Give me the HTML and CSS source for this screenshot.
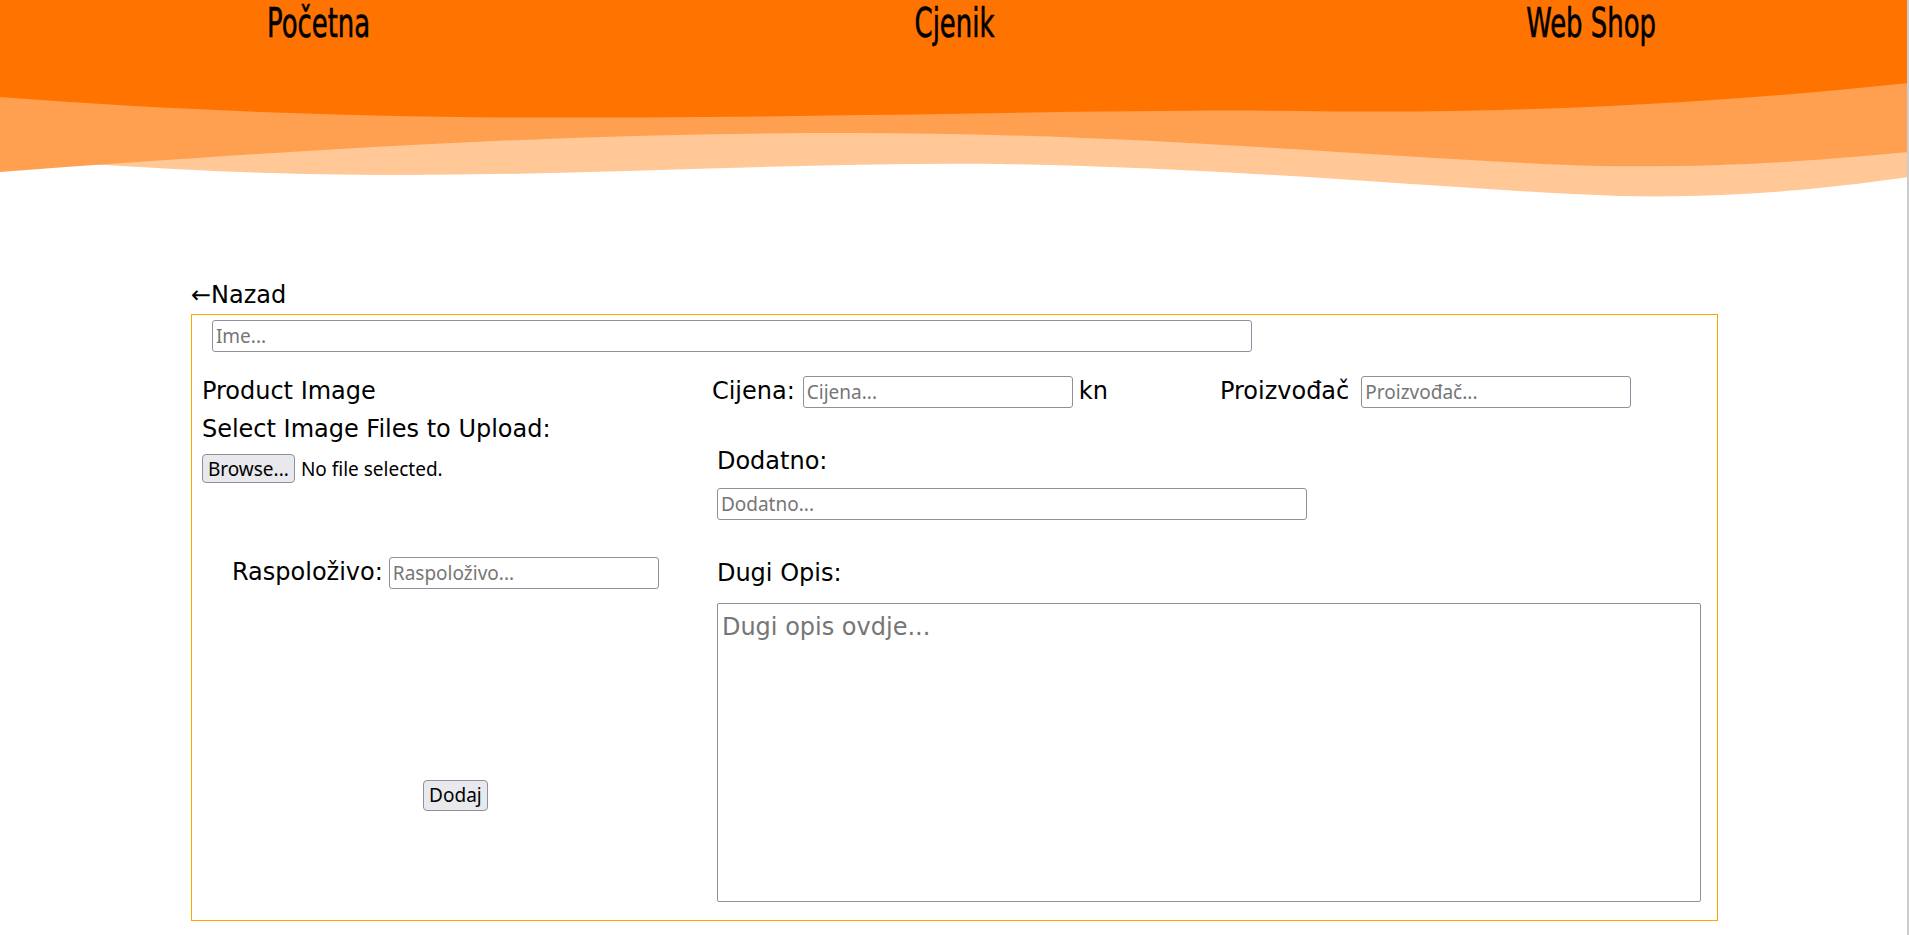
FILE: index.html
```html
<!DOCTYPE html>
<html lang="hr">
<head>
<meta charset="utf-8">
<title>Dodaj proizvod</title>
<link rel="stylesheet" href="styles.css">
</head>
<body>
<header class="site-header">
  <nav class="nav">
    <div class="nav-item"><a class="nav-link" href="#">Početna</a></div>
    <div class="nav-item"><a class="nav-link" href="#">Cjenik</a></div>
    <div class="nav-item"><a class="nav-link" href="#">Web Shop</a></div>
  </nav>
  <svg class="waves" viewBox="0 80 1909 120" preserveAspectRatio="none" aria-hidden="true">
    <path fill="#FFC896" d="M0,80 L0,158 C150,168 250,175 400,175 C600,175 800,162 1000,164 C1250,168 1450,190 1620,196 C1750,199 1850,185 1909,177 L1909,80 Z"/>
    <path fill="#FF9F50" d="M0,80 L0,172 C300,150 550,133 850,133 C1150,133 1400,160 1600,166 C1750,168 1850,157 1909,152 L1909,80 Z"/>
    <path fill="#FF7300" d="M0,80 L0,97 C200,112 400,120 700,117 C950,115 1150,109 1300,111 C1500,114 1700,105 1909,83 L1909,80 Z"/>
  </svg>
</header>

<main class="page">
  <a class="back" href="#">←Nazad</a>
  <form class="product-form">
    <div class="name-row">
      <input class="field-input name-input" type="text" placeholder="Ime...">
    </div>
    <div class="form-grid">
      <div class="col-left">
        <p class="text-line">Product Image</p>
        <p class="text-line">Select Image Files to Upload:</p>
        <div class="file-row">
          <button type="button" class="btn">Browse...</button>
          <span class="file-status">No file selected.</span>
        </div>
        <div class="stock-row">
          <label class="label">Raspoloživo:</label>
          <input class="field-input small-input" type="text" placeholder="Raspoloživo...">
        </div>
        <div class="submit-row">
          <button type="button" class="btn btn-submit">Dodaj</button>
        </div>
      </div>
      <div class="col-right">
        <div class="price-row">
          <div class="cell cell-price">
            <label class="label price-label">Cijena:</label>
            <input class="field-input small-input" type="text" placeholder="Cijena...">
            <span class="label">kn</span>
          </div>
          <div class="cell cell-maker">
            <label class="label maker-label">Proizvođač</label>
            <input class="field-input small-input" type="text" placeholder="Proizvođač...">
          </div>
        </div>
        <div class="field">
          <label class="label block-label first-label">Dodatno:</label>
          <input class="field-input wide-input" type="text" placeholder="Dodatno...">
        </div>
        <div class="field">
          <label class="label block-label second-label">Dugi Opis:</label>
          <textarea class="long-text" placeholder="Dugi opis ovdje..."></textarea>
        </div>
      </div>
    </div>
  </form>
</main>
<div class="scroll-line"></div>
</body>
</html>
```

FILE: styles.css
```css
* { box-sizing: border-box; }

html, body {
  margin: 0;
  padding: 0;
  background: #ffffff;
}

body {
  font-family: "DejaVu Sans", "Noto Sans", sans-serif;
  font-size: 24px;
  line-height: 37.5px;
  color: #000;
}

.site-header {
  display: block;
}

.nav {
  display: grid;
  grid-template-columns: 1fr 1fr 1fr;
  height: 80px;
  background: #FF7300;
}

.nav-item {
  text-align: center;
  padding-top: 1px;
}

.nav-link {
  display: inline-block;
  font-family: "DejaVu Sans Condensed", "DejaVu Sans", sans-serif;
  font-size: 40px;
  line-height: 44px;
  color: #000;
  text-decoration: none;
  -webkit-text-stroke: 0.6px #000;
  transform: scaleX(0.72);
}

.waves {
  display: block;
  width: 100%;
  height: 120px;
}

.page {
  width: 80%;
  margin: 77px auto 0;
}

.back {
  display: block;
  color: #000;
  text-decoration: none;
  height: 37px;
}

.product-form {
  border: 1px solid #FFA500;
  padding: 5px 0 18px;
}

.name-row {
  padding-left: 20px;
}

.field-input {
  font-family: "Noto Sans", "Open Sans", sans-serif;
  font-size: 19px;
  height: 32px;
  padding: 2px 3px;
  border: 1px solid #8f8f9d;
  border-radius: 3px;
  background: #fff;
  color: #000;
  vertical-align: middle;
}

.field-input::placeholder,
.long-text::placeholder {
  color: #767676;
  opacity: 1;
}

.name-input {
  width: 1040px;
  display: block;
}

.form-grid {
  display: grid;
  grid-template-columns: 507px 1fr;
  margin-top: 21px;
}

.col-left {
  display: flex;
  flex-direction: column;
}

.text-line {
  margin: 0;
  padding-left: 10px;
}

.file-row {
  display: flex;
  align-items: center;
  gap: 6px;
  padding-left: 10px;
  margin-top: 6px;
  font-family: "Noto Sans", "Open Sans", sans-serif;
  font-size: 19px;
  line-height: 24px;
}

.btn {
  font-family: "Noto Sans", "Open Sans", sans-serif;
  font-size: 19px;
  line-height: 24px;
  padding: 1px 5px;
  background: #e9e9ed;
  border: 1px solid #8f8f9d;
  border-radius: 4px;
  color: #000;
  height: 29px;
}

.stock-row {
  display: flex;
  justify-content: center;
  align-items: center;
  gap: 6px;
  margin-top: 71px;
}

.small-input {
  width: 270px;
}

.submit-row {
  display: flex;
  justify-content: center;
  padding-left: 20px;
  margin-top: 188px;
}

.btn-submit {
  font-size: 19px;
  height: 31px;
}

.col-right {
  display: flex;
  flex-direction: column;
}

.price-row {
  display: grid;
  grid-template-columns: 508px 1fr;
  height: 38px;
}

.cell {
  display: flex;
  align-items: center;
  gap: 6px;
}

.cell-price {
  padding-left: 13px;
}

.price-label {
  margin-right: 2px;
}

.cell-maker {
  padding-left: 13px;
}

.maker-label {
  margin-right: 6px;
}

.field {
  display: flex;
  flex-direction: column;
  align-items: flex-start;
  padding-left: 18px;
}

.block-label {
  display: block;
}

.first-label {
  margin-top: 32px;
  margin-bottom: 7px;
}

.second-label {
  margin-top: 35px;
  margin-bottom: 11px;
}

.wide-input {
  width: 590px;
}

.long-text {
  width: 984px;
  height: 299px;
  font-family: inherit;
  font-size: 24px;
  line-height: 34px;
  padding: 6px 4px 2px;
  border: 1px solid #8f8f9d;
  border-radius: 2px;
  resize: none;
  display: block;
}

.scroll-line {
  position: fixed;
  top: 0;
  right: 0;
  width: 2px;
  height: 100%;
  background: #cdcdcd;
}
```
